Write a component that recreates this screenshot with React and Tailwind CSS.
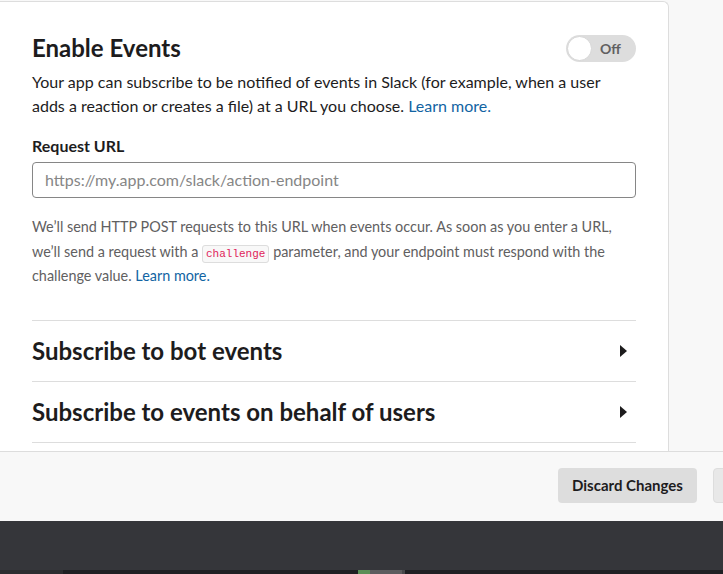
import React from "react";

const font = { fontFamily: "Lato, 'Noto Sans', sans-serif" };

function Toggle() {
  return (
    <div className="flex h-[27px] w-[70px] items-center rounded-full bg-[#dddddd] pl-[1px]">
      <div className="h-[25px] w-[25px] rounded-full border border-[#d6d6d6] bg-white" />
      <span className="ml-[8px] text-[14px] font-bold text-[#616061]">Off</span>
    </div>
  );
}

function Caret() {
  return (
    <svg width="9" height="12" viewBox="0 0 9 12" className="mr-[8px]">
      <path d="M1 0 L8 6 L1 12 Z" fill="#1d1c1d" />
    </svg>
  );
}

function Row({ title }) {
  return (
    <div className="flex h-[61px] items-center justify-between border-t border-[#dddddd]">
      <span className="text-[24px] leading-[32px] font-bold text-[#1d1c1d]">{title}</span>
      <Caret />
    </div>
  );
}

export default function App() {
  return (
    <div className="flex h-[574px] w-[723px] flex-col overflow-hidden bg-[#f8f8f8]" style={font}>
      <div className="flex h-[451px] shrink-0 pt-[1px]">
        <div className="w-[669px] shrink-0 rounded-tr-[6px] border-r border-t border-[#dddddd] bg-white pl-[32px] pr-[32px] pt-[30px]">
          <div className="flex items-center justify-between">
            <h2 className="text-[24px] leading-[32px] font-bold text-[#1d1c1d]">Enable Events</h2>
            <Toggle />
          </div>
          <p className="mt-[6px] text-[16px] leading-[24px] text-[#1d1c1d]">
            Your app can subscribe to be notified of events in Slack (for example, when a user adds a reaction or
            creates a file) at a URL you choose. <span className="text-[#1264a3]">Learn more.</span>
          </p>
          <div className="mt-[16px] text-[16px] leading-[24px] font-bold text-[#1d1c1d]">Request URL</div>
          <div className="mt-[4px] flex h-[36px] items-center rounded-[4px] border border-[#868686] px-[12px] text-[16px] text-[#868686]">
            https://my.app.com/slack/action-endpoint
          </div>
          <p className="mt-[17px] text-[14.4px] leading-[24.5px] text-[#616061]">
            We’ll send HTTP POST requests to this URL when events occur. As soon as you enter a URL, we’ll send a
            request with a{" "}
            <code
              className="rounded-[3px] border border-[#dddddd] bg-[#f8f8f8] px-[3px] py-[2px] text-[11px] leading-[14px] text-[#e01e5a]"
              style={{ fontFamily: "'Liberation Mono', monospace" }}
            >
              challenge
            </code>{" "}
            parameter, and your endpoint must respond with the challenge value.{" "}
            <span className="text-[#1264a3]">Learn more.</span>
          </p>
          <div className="mt-[31px] border-b border-[#dddddd]">
            <Row title="Subscribe to bot events" />
            <Row title="Subscribe to events on behalf of users" />
          </div>
        </div>
      </div>
      <div className="flex h-[70px] shrink-0 items-start gap-[16px] border-t border-[#dddddd] bg-[#f8f8f8] pl-[558px] pt-[16px]">
        <button className="h-[35px] shrink-0 rounded-[4px] bg-[#dddddd] px-[14px] text-[15px] font-bold text-[#1d1c1d]">
          Discard Changes
        </button>
        <button className="h-[35px] shrink-0 rounded-[4px] border border-[#dddddd] bg-[#e8e8e8] px-[14px] text-[15px] font-bold text-[#1d1c1d]">
          Save Changes
        </button>
      </div>
      <div className="flex flex-1 flex-col justify-end bg-[#35363a]">
        <div className="flex h-[4px]">
          <div className="w-[63px] bg-[#2c2d30]" />
          <div className="w-[295px] bg-[#1f2023]" />
          <div className="w-[12px] bg-[#5b8f57]" />
          <div className="w-[32px] bg-[#5c5c5e]" />
          <div className="w-[3px] bg-[#47484b]" />
          <div className="flex-1 bg-[#1f2023]" />
        </div>
      </div>
    </div>
  );
}
